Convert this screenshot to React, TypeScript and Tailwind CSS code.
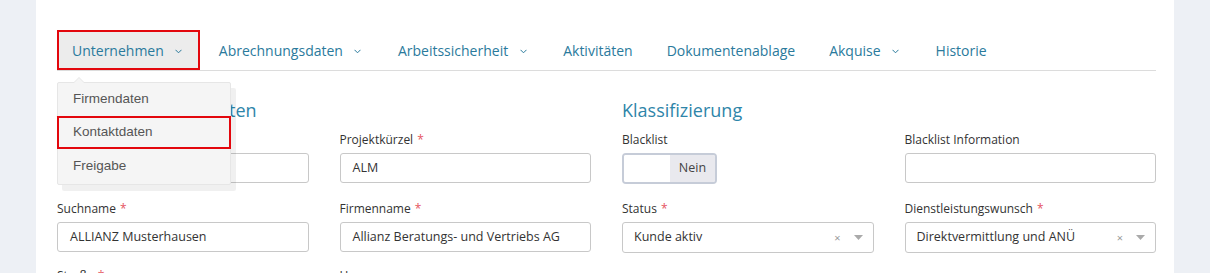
import React from 'react';

const teal = 'text-[#2a7a9c]';

function Chevron() {
    return (
        <span className="ml-[9px] flex w-[12px] items-center justify-center pt-[3px]">
            <svg width="7" height="5" viewBox="0 0 7 5" fill="none">
                <polyline points="0.5,0.8 3.5,3.8 6.5,0.8" stroke="#2a7a9c" strokeWidth="1" />
            </svg>
        </span>
    );
}

function Label({ text, required }: { text: string; required?: boolean }) {
    return (
        <div className="h-[17px] text-[12px] leading-[17px] text-[#333]">
            {text}
            {required && <span className="ml-[4px] text-[#e5555f]">*</span>}
        </div>
    );
}

function TextInput({ value }: { value: string }) {
    return (
        <div className="mt-[5px] flex h-[30px] items-center rounded-[3px] border border-[#c8c8c8] bg-white px-[12px] text-[12.5px] text-[#333]">
            {value}
        </div>
    );
}

function SelectInput({ value }: { value: string }) {
    return (
        <div className="mt-[5px] flex h-[31px] items-center rounded-[3px] border border-[#c8c8c8] bg-white pl-[11px] pr-[10px] text-[12.5px] text-[#333]">
            <span className="flex-1">{value}</span>
            <span className="mr-[13px] text-[11px] leading-none text-[#999]">×</span>
            <svg width="9" height="5" viewBox="0 0 9 5">
                <polygon points="0,0 9,0 4.5,5" fill="#aaa" />
            </svg>
        </div>
    );
}

export default function App() {
    const tabs = [
        { label: 'Abrechnungsdaten', menu: true },
        { label: 'Arbeitssicherheit', menu: true },
        { label: 'Aktivitäten', menu: false },
        { label: 'Dokumentenablage', menu: false },
        { label: 'Akquise', menu: true },
        { label: 'Historie', menu: false },
    ];

    return (
        <div className="flex h-[273px] w-[1210px] overflow-hidden bg-[#edf0f5] font-['Open_Sans',sans-serif]">
            <div className="w-[36px] shrink-0" />
            <main className="w-[1138px] shrink-0 bg-white pl-[21px] pr-[18px] pt-[30px]">
                {/* Tabs */}
                <nav className="relative flex h-[41px] gap-[4px] border-b border-[#dcdcdc]">
                    <div className="flex h-[40px] items-center border-2 border-[#e3070d] bg-[#ececec] px-[13px] text-[14px]">
                        <span className={teal}>Unternehmen</span>
                        <Chevron />
                    </div>
                    {tabs.map((t) => (
                        <div key={t.label} className="flex h-[40px] items-center px-[15px] text-[14px]">
                            <span className={teal}>{t.label}</span>
                            {t.menu && <Chevron />}
                        </div>
                    ))}

                    {/* Dropdown */}
                    <div className="absolute left-0 top-[52px] z-10 w-[174px] rounded-[2px] border border-[#e6e6e6] bg-[#f5f5f5] shadow-[5px_6px_0_rgba(0,0,0,0.06)] font-['Liberation_Sans',Arial,sans-serif] text-[13.5px] text-[#555]">
                        <div className="absolute -top-[6px] left-[15px] h-0 w-0 border-x-[6px] border-b-[6px] border-x-transparent border-b-[#e6e6e6]" />
                        <div className="absolute -top-[5px] left-[16px] h-0 w-0 border-x-[5px] border-b-[5px] border-x-transparent border-b-[#f5f5f5]" />
                        <div className="flex h-[33px] items-center px-[15px]">Firmendaten</div>
                        <div className="-mx-px flex h-[33px] items-center border-2 border-[#e3070d] px-[14px]">Kontaktdaten</div>
                        <div className="flex h-[35px] items-center px-[15px]">Freigabe</div>
                    </div>
                </nav>

                {/* Form */}
                <div className="mt-[26px] grid grid-cols-4 gap-x-[31px]">
                    <h2 className="col-span-2 text-[18px] leading-[26px] text-[#2e85a9]">Allgemeine Grunddaten</h2>
                    <h2 className="col-span-2 text-[18px] leading-[26px] text-[#2e85a9]">Klassifizierung</h2>

                    <div className="mt-[8px]">
                        <Label text="Kundennummer" required />
                        <TextInput value="10045" />
                    </div>
                    <div className="mt-[8px]">
                        <Label text="Projektkürzel" required />
                        <TextInput value="ALM" />
                    </div>
                    <div className="mt-[8px]">
                        <Label text="Blacklist" />
                        <div className="mt-[5px] flex h-[31px] w-[95px] overflow-hidden rounded-[4px] border-2 border-[#c6ccd8]">
                            <div className="w-[46px] bg-white" />
                            <div className="flex flex-1 items-center justify-center bg-[#e9e9ee] text-[12.5px] text-[#444]">Nein</div>
                        </div>
                    </div>
                    <div className="mt-[8px]">
                        <Label text="Blacklist Information" />
                        <TextInput value="" />
                    </div>

                    <div className="mt-[16px]">
                        <Label text="Suchname" required />
                        <TextInput value="ALLIANZ Musterhausen" />
                    </div>
                    <div className="mt-[16px]">
                        <Label text="Firmenname" required />
                        <TextInput value="Allianz Beratungs- und Vertriebs AG" />
                    </div>
                    <div className="mt-[16px]">
                        <Label text="Status" required />
                        <SelectInput value="Kunde aktiv" />
                    </div>
                    <div className="mt-[16px]">
                        <Label text="Dienstleistungswunsch" required />
                        <SelectInput value="Direktvermittlung und ANÜ" />
                    </div>

                    <div className="mt-[14px]">
                        <Label text="Straße" required />
                        <TextInput value="" />
                    </div>
                    <div className="mt-[14px]">
                        <Label text="Hausnummer" />
                        <TextInput value="" />
                    </div>
                </div>
            </main>
            <div className="w-[36px] shrink-0" />
        </div>
    );
}
